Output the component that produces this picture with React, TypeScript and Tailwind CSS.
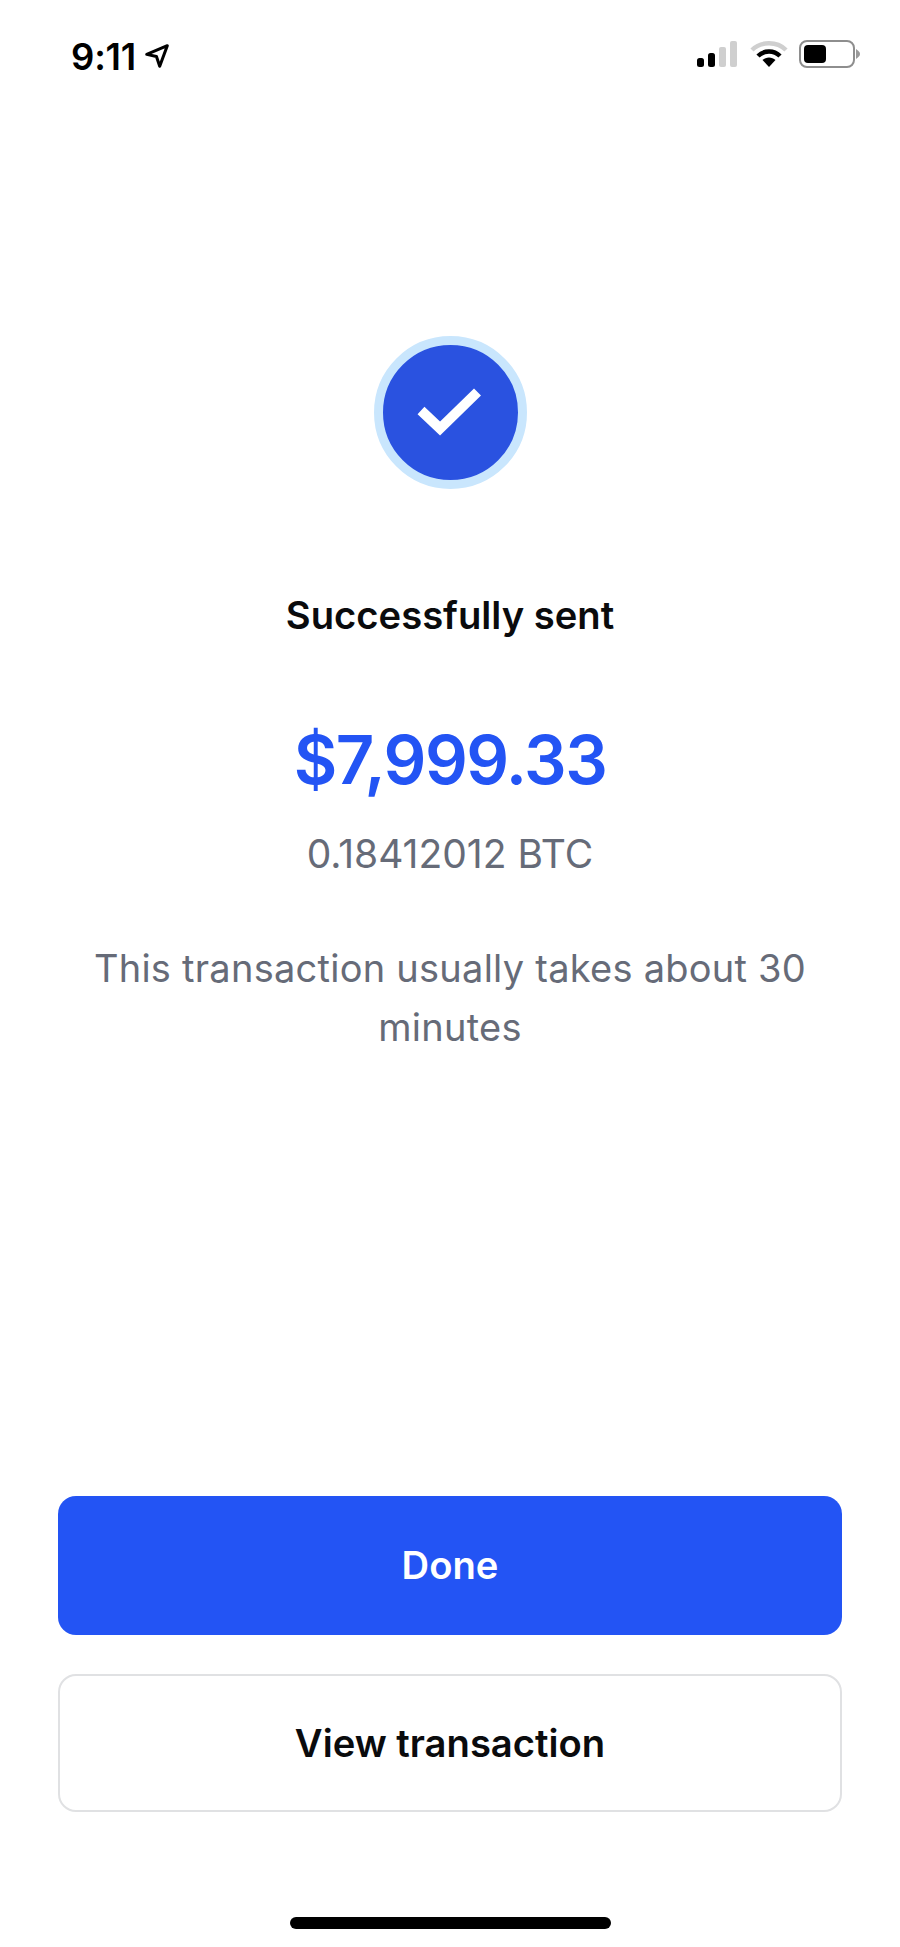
import React from 'react';

const StatusBar: React.FC = () => (
    <div className="h-[112px] pl-[71px] pr-[40px] pt-[37px] flex items-start justify-between">
        <div className="flex items-center h-[40px]">
            <span className="text-[36.5px] leading-[40px] font-semibold text-black tracking-[-0.2px]">9:11</span>
            <svg width="26" height="26" viewBox="0 0 24 24" className="ml-[8px] mt-[-2px]">
                <path d="M2.5 10.5 L21.5 2.5 L14.5 21.5 L11.5 12.5 Z" fill="none" stroke="#000" strokeWidth="2.8" strokeLinejoin="round" />
            </svg>
        </div>
        <div className="flex items-center gap-[11px] mt-[3px]">
            <svg width="40" height="28" viewBox="0 0 40 28">
                <rect x="0" y="18" width="7" height="9" rx="2.5" fill="#000" />
                <rect x="11" y="13" width="7" height="14" rx="2.5" fill="#000" />
                <rect x="22" y="7" width="7" height="20" rx="2" fill="#cfcfcf" />
                <rect x="33" y="1" width="7" height="26" rx="2" fill="#cfcfcf" />
            </svg>
            <svg width="38" height="28" viewBox="0 0 38 28" className="ml-[2px]">
                <path d="M2 10 C11 1 27 1 36 10" fill="none" stroke="#cfcfcf" strokeWidth="4.5" />
                <path d="M8 16 C14 10 24 10 30 16" fill="none" stroke="#000" strokeWidth="4.5" />
                <path d="M12.5 20 C16 16.5 22 16.5 25.5 20 L19 27 Z" fill="#000" />
            </svg>
            <div className="flex items-center">
                <div className="w-[56px] h-[28px] rounded-[8px] border-[2.5px] border-[#8e8e8e] p-[3px]">
                    <div className="w-[22px] h-full rounded-[4px] bg-black" />
                </div>
                <svg width="4" height="10" viewBox="0 0 4 10" className="ml-[1px]">
                    <path d="M0 0 C3 2 4 3.5 4 5 C4 6.5 3 8 0 10 Z" fill="#9a9a9a" />
                </svg>
            </div>
        </div>
    </div>
);

const SuccessBadge: React.FC = () => (
    <div className="w-[153px] h-[153px] rounded-full bg-[#2a52e0] border-[9px] border-[#c9e6fd] flex items-center justify-center">
        <svg width="66" height="52" viewBox="0 0 66 52">
            <path d="M4 23.5 L23 41.5 L60.5 5" fill="none" stroke="#fff" strokeWidth="10" />
        </svg>
    </div>
);

export default function App() {
    return (
        <div
            className="w-[900px] h-[1947px] bg-white flex flex-col overflow-hidden"
            style={{ fontFamily: 'Inter, "Noto Sans", sans-serif' }}
        >
            <StatusBar />

            <div className="flex flex-col items-center pt-[224px]">
                <SuccessBadge />
                <h1 className="mt-[99px] text-[38.2px] leading-[54px] font-semibold text-[#0a0b0d]">Successfully sent</h1>
                <p className="mt-[73px] text-[67px] leading-[90px] font-semibold text-[#2354f4] tracking-[-1.5px]">$7,999.33</p>
                <p className="mt-[21px] text-[39px] leading-[56px] text-[#666b78]">0.18412012 BTC</p>
                <p className="mt-[57px] w-[760px] text-center text-[38px] leading-[59px] text-[#666b78] tracking-[0.25px]">
                    This transaction usually takes about 30 minutes
                </p>
            </div>

            <div className="mt-auto px-[58px] flex flex-col gap-[39px]">
                <button className="h-[139px] pt-[1px] rounded-[18px] bg-[#2354f4] text-white text-[38.2px] font-semibold">Done</button>
                <button className="h-[138px] pt-[1px] rounded-[18px] border-2 border-[#e0e1e3] bg-white text-[#0a0b0d] text-[38.2px] font-semibold">View transaction</button>
            </div>

            <div className="h-[135px] flex justify-center pt-[105px]">
                <div className="w-[321px] h-[12px] rounded-full bg-black" />
            </div>
        </div>
    );
}
